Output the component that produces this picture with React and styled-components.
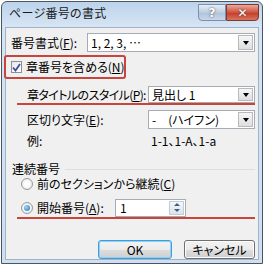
import styled, { createGlobalStyle } from "styled-components";

const GlobalStyle = createGlobalStyle`
  html, body {
    margin: 0;
    padding: 0;
    background: #ffffff;
  }
  body {
    font-family: "Noto Sans CJK JP", "Noto Sans", sans-serif;
    font-size: 12px;
    line-height: 14px;
    font-feature-settings: "palt";
    color: #000;
  }
  u {
    text-underline-offset: 1px;
  }
`;

const Window = styled.div`
  width: 262px;
  height: 263px;
  margin: 1px 0 0 1px;
  border: 1px solid #4a5563;
  border-radius: 6px 6px 0 0;
  background: linear-gradient(#bcd3ec 0px, #d6e4f3 24px, #cfdff0 100%);
  display: flex;
  flex-direction: column;
  box-sizing: border-box;
  padding: 0 3px 3px 3px;
`;

const TitleBar = styled.div`
  height: 25px;
  flex-shrink: 0;
  display: flex;
  align-items: flex-start;
  justify-content: space-between;
`;

const Title = styled.span`
  margin: 4px 0 0 4px;
  letter-spacing: 0.3px;
  color: #1a1a1a;
`;

const Caps = styled.div`
  display: flex;
  margin-top: 2px;
`;

const CapButton = styled.div`
  width: ${(p) => (p.$close ? 33 : 28)}px;
  height: 17px;
  box-sizing: border-box;
  border: 1px solid ${(p) => (p.$close ? "#7a3a32" : "#7d8fa5")};
  border-radius: ${(p) => (p.$close ? "0 0 4px 0" : "0 0 0 4px")};
  background: ${(p) =>
    p.$close
      ? "linear-gradient(#e9a99c, #d0523e 50%, #c23b27 51%, #d8755f)"
      : "linear-gradient(#e4edf7, #bccde2 50%, #aec2da 51%, #c8d7ea)"};
  display: flex;
  align-items: center;
  justify-content: center;
  color: #fff;
  font-family: "DejaVu Sans", sans-serif;
  font-weight: bold;
  font-size: 12px;
  text-shadow: 0 0 2px #333;
`;

const Client = styled.div`
  flex: 1;
  background: #f0f0f0;
  border: 1px solid #9fb3c9;
  display: flex;
  flex-direction: column;
  padding: 0 3px 0 4px;
`;

const Row = styled.div`
  display: flex;
  align-items: center;
  height: ${(p) => p.$h || 19}px;
  flex-shrink: 0;
  margin-top: ${(p) => p.$mt || 0}px;
  padding-left: ${(p) => p.$pl || 0}px;
  white-space: nowrap;
`;

const Label = styled.span`
  width: ${(p) => p.$w}px;
  flex-shrink: 0;
  white-space: nowrap;
  letter-spacing: ${(p) => (p.$tight ? "-0.6px" : "0")};
`;

const Combo = styled.div`
  flex: 1;
  height: ${(p) => p.$h || 19}px;
  box-sizing: border-box;
  background: #fff;
  border: 1px solid #a6acb4;
  display: flex;
  align-items: center;
  justify-content: space-between;
  padding-left: 3px;
`;

const ComboText = styled.span`
  white-space: nowrap;
`;

const DropButton = styled.div`
  width: 15px;
  height: calc(100% - 2px);
  margin-right: 1px;
  box-sizing: border-box;
  border: 1px solid #b9b9b9;
  background: linear-gradient(#f6f6f6, #dedede);
  display: flex;
  align-items: center;
  justify-content: center;
`;

const Arrow = styled.span`
  width: 0;
  height: 0;
  border-left: 3px solid transparent;
  border-right: 3px solid transparent;
  border-top: 4px solid #000;
`;

const Highlight = styled.div`
  width: 122px;
  height: 24px;
  flex-shrink: 0;
  margin: 3px 0 0 -6px;
  box-sizing: border-box;
  border: 2px solid #c8453b;
  border-radius: 3px;
  display: flex;
  align-items: center;
  padding-left: 5px;
  gap: 4px;
  white-space: nowrap;
`;

const CheckBox = styled.span`
  width: 12px;
  height: 12px;
  box-sizing: border-box;
  border: 1px solid #8e8f8f;
  background: linear-gradient(135deg, #e8e8e8, #ffffff);
  display: flex;
  align-items: center;
  justify-content: center;
`;

const Underline = styled.div`
  height: 2px;
  flex-shrink: 0;
  background: #c8453b;
  margin-left: 7px;
`;

const GroupHead = styled.div`
  display: flex;
  align-items: center;
  gap: 5px;
  margin-top: 12px;
  padding-left: 2px;
  flex-shrink: 0;
`;

const GroupRule = styled.div`
  flex: 1;
  height: 1px;
  background: #d5dfe5;
`;

const Radio = styled.span`
  width: 12px;
  height: 12px;
  box-sizing: border-box;
  border-radius: 50%;
  border: 1px solid #9a9a9a;
  background: radial-gradient(circle, #ffffff 30%, #dcdcdc);
  display: flex;
  align-items: center;
  justify-content: center;
  margin-right: 4px;
  flex-shrink: 0;
  &::after {
    content: "";
    display: ${(p) => (p.$on ? "block" : "none")};
    width: 6px;
    height: 6px;
    border-radius: 50%;
    background: radial-gradient(circle at 35% 35%, #9fd6f6, #1c74b8);
  }
`;

const SpinInput = styled.div`
  width: 71px;
  height: 18px;
  box-sizing: border-box;
  background: #fff;
  border: 1px solid #a6acb4;
  display: flex;
  align-items: center;
  justify-content: space-between;
  padding-left: 4px;
`;

const Spin = styled.div`
  width: 15px;
  height: 14px;
  margin-right: 1px;
  box-sizing: border-box;
  border: 1px solid #c3ccd6;
  background: linear-gradient(#f4f7fa, #dce3ea);
  display: flex;
  flex-direction: column;
  align-items: center;
  justify-content: space-around;
`;

const SpinArrow = styled.span`
  width: 0;
  height: 0;
  border-left: 3px solid transparent;
  border-right: 3px solid transparent;
  ${(p) =>
    p.$up ? "border-bottom: 3px solid #3a5f8a;" : "border-top: 3px solid #3a5f8a;"}
`;

const Buttons = styled.div`
  display: flex;
  justify-content: flex-end;
  gap: 12px;
  margin-top: 21px;
  flex-shrink: 0;
`;

const Button = styled.div`
  width: ${(p) => p.$w}px;
  height: 19px;
  box-sizing: border-box;
  border: 1px solid ${(p) => (p.$default ? "#3c9fdb" : "#707070")};
  border-radius: 3px;
  background: linear-gradient(#f2f2f2 0%, #ebebeb 50%, #dddddd 51%, #cfcfcf 100%);
  box-shadow: ${(p) => (p.$default ? "inset 0 0 0 1px #8fd1f4" : "inset 0 0 0 1px #fcfcfc")};
  display: flex;
  align-items: center;
  justify-content: center;
`;

export default function App() {
  return (
    <>
      <GlobalStyle />
      <Window>
        <TitleBar>
          <Title>ページ番号の書式</Title>
          <Caps>
            <CapButton>?</CapButton>
            <CapButton $close>✕</CapButton>
          </Caps>
        </TitleBar>
        <Client>
          <Row $mt={5} $pl={1}>
            <Label $w={76}>
              番号書式(<u>F</u>):
            </Label>
            <Combo>
              <ComboText>1, 2, 3, …</ComboText>
              <DropButton>
                <Arrow />
              </DropButton>
            </Combo>
          </Row>

          <Highlight>
            <CheckBox>
              <svg width="9" height="9" viewBox="0 0 9 9">
                <path d="M1 4.5 L3.5 7.5 L8 1" fill="none" stroke="#3b4fa0" strokeWidth="1.8" />
              </svg>
            </CheckBox>
            <span>
              章番号を含める(<u>N</u>)
            </span>
          </Highlight>

          <Row $mt={7} $h={17} $pl={17}>
            <Label $w={121} $tight>
              章タイトルのスタイル(<u>P</u>):
            </Label>
            <Combo $h={17}>
              <ComboText>見出し 1</ComboText>
              <DropButton>
                <Arrow />
              </DropButton>
            </Combo>
          </Row>
          <Underline />

          <Row $mt={5} $pl={17}>
            <Label $w={121}>
              区切り文字(<u>E</u>):
            </Label>
            <Combo>
              <ComboText>-　(ハイフン)</ComboText>
              <DropButton>
                <Arrow />
              </DropButton>
            </Combo>
          </Row>

          <Row $mt={3} $h={18} $pl={17}>
            <Label $w={124}>例:</Label>
            <span>1-1、1-A、1-a</span>
          </Row>

          <GroupHead>
            <span>連続番号</span>
            <GroupRule />
          </GroupHead>

          <Row $h={15} $pl={11}>
            <Radio />
            <span>
              前のセクションから継続(<u>C</u>)
            </span>
          </Row>

          <Row $mt={7} $h={19} $pl={11}>
            <Radio $on />
            <Label $w={78}>
              開始番号(<u>A</u>):
            </Label>
            <SpinInput>
              <span>1</span>
              <Spin>
                <SpinArrow $up />
                <SpinArrow />
              </Spin>
            </SpinInput>
          </Row>
          <Underline />

          <Buttons>
            <Button $w={74} $default>
              OK
            </Button>
            <Button $w={71}>キャンセル</Button>
          </Buttons>
        </Client>
      </Window>
    </>
  );
}
